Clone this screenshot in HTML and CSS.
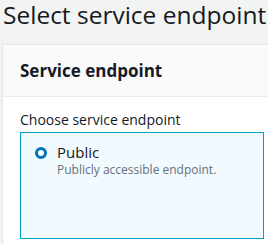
FILE: index.html
```html
<!DOCTYPE html>
<html lang="en">
<head>
  <meta charset="UTF-8">
  <title>Select service endpoint</title>
  <link rel="stylesheet" href="styles.css">
</head>
<body>
  <h1 class="page-title">Select service endpoint</h1>

  <div class="panel">
    <div class="panel-header">
      <h2>Service endpoint</h2>
    </div>
    <div class="panel-body">
      <p class="field-label">Choose service endpoint</p>
      <div class="tiles">
        <div class="tile selected">
          <span class="radio"></span>
          <div class="tile-text">
            <div class="tile-title">Public</div>
            <div class="tile-desc">Publicly accessible endpoint.</div>
          </div>
        </div>
        <div class="tile">
          <span class="radio"></span>
          <div class="tile-text">
            <div class="tile-title">VPC</div>
            <div class="tile-desc">Private endpoint in a VPC.</div>
          </div>
        </div>
      </div>
    </div>
  </div>
</body>
</html>
```

FILE: styles.css
```css
body {
  margin: 0;
  background-color: #f2f3f3;
  font-family: "Open Sans", Arial, sans-serif;
  color: #16191f;
  overflow: hidden;
}

.page-title {
  margin: 0;
  padding-left: 3px;
  font-size: 24.5px;
  font-weight: 400;
  line-height: 30px;
  white-space: nowrap;
}

.panel {
  margin: 14px 0 0 2px;
  width: 600px;
  background: #fff;
  border: 1px solid #e4e7e7;
}

.panel-header {
  background: #fafafa;
  border-bottom: 1px solid #eaeded;
  height: 51px;
  display: flex;
  align-items: center;
  padding-left: 17px;
}

.panel-header h2 {
  margin: 0;
  font-size: 17px;
  font-weight: 700;
}

.panel-body {
  padding: 14px 17px;
}

.field-label {
  margin: 0 0 4px;
  font-size: 14px;
  line-height: 17px;
}

.tiles {
  display: flex;
  gap: 18px;
}

.tile {
  width: 214px;
  height: 105px;
  border: 1px solid #aab7b8;
  display: flex;
  align-items: flex-start;
  gap: 10px;
  padding: 0 14px;
}

.tile.selected {
  background: #f1faff;
  border-color: #00a1c9;
}

.radio {
  flex: none;
  width: 6px;
  height: 6px;
  margin-top: 14px;
  border: 3.5px solid #aab7b8;
  border-radius: 50%;
  background: #fff;
}

.tile.selected .radio {
  border-color: #0073bb;
}

.tile-text {
  padding-top: 9px;
}

.tile-title {
  font-size: 15px;
  line-height: 20px;
}

.tile-desc {
  font-size: 12px;
  line-height: 15px;
  color: #687078;
}
```
